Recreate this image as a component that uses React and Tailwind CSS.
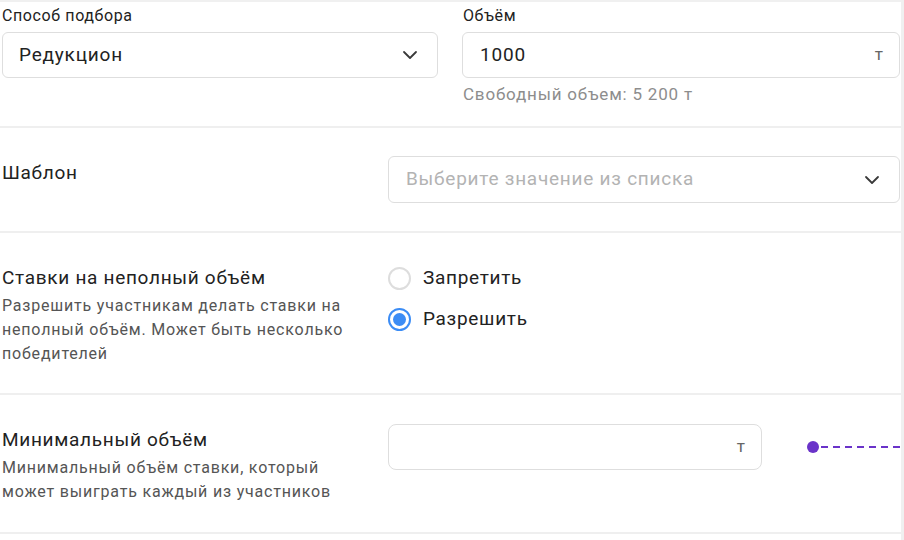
import React from "react";

function Chevron({ className = "" }) {
  return (
    <svg width="16" height="10" viewBox="0 0 16 10" className={className} fill="none">
      <path d="M2 2l6 6 6-6" stroke="#3a3a3a" strokeWidth="1.8" strokeLinecap="round" strokeLinejoin="round" />
    </svg>
  );
}

function Divider() {
  return <div className="h-[2px] bg-[#efefef]" />;
}

export default function App() {
  return (
    <div
      className="w-[904px] h-[540px] overflow-hidden bg-white text-[#222]"
      style={{ fontFamily: "Roboto, 'Noto Sans', sans-serif" }}
    >
      <div className="h-full border-t-2 border-r-[3px] border-[#f0f0f0]">
        {/* Row 1 */}
        <div className="flex gap-[24px] pl-[2px] pt-[4px] pb-[22px]">
          <div className="w-[436px] shrink-0">
            <div className="text-[16px] leading-[20px] h-[20px] tracking-[0.6px]">Способ подбора</div>
            <div className="mt-[6px] h-[46px] rounded-[6px] border border-[#dedede] flex items-center justify-between pl-[16px] pr-[19px]">
              <span className="text-[19px] tracking-[0.8px]">Редукцион</span>
              <Chevron />
            </div>
          </div>
          <div className="w-[438px] shrink-0">
            <div className="text-[16px] leading-[20px] h-[20px] pl-[1px] tracking-[0.6px]">Объём</div>
            <div className="mt-[6px] h-[46px] rounded-[6px] border border-[#dedede] flex items-center justify-between pl-[17px] pr-[16px]">
              <span className="text-[19px] tracking-[0.8px]">1000</span>
              <span className="text-[17px] text-[#666]">т</span>
            </div>
            <div className="mt-[6px] text-[17px] leading-[20px] text-[#8d8d8d] pl-[1px] tracking-[0.8px]">
              Свободный объем: 5 200 т
            </div>
          </div>
        </div>
        <Divider />

        {/* Row 2 */}
        <div className="flex pl-[2px] pt-[28px] pb-[28px]">
          <div className="w-[386px] shrink-0 pt-[5px] text-[19px] leading-[24px] tracking-[0.7px]">Шаблон</div>
          <div className="w-[512px] shrink-0 h-[47px] rounded-[6px] border border-[#dedede] flex items-center justify-between pl-[17px] pr-[19px]">
            <span className="text-[19px] text-[#b3b3b3] tracking-[0.75px]">Выберите значение из списка</span>
            <Chevron />
          </div>
        </div>
        <Divider />

        {/* Row 3 */}
        <div className="flex pl-[2px] pt-[33px] pb-[27px]">
          <div className="w-[386px] shrink-0">
            <div className="text-[19px] leading-[24px] tracking-[0.7px]">Ставки на неполный объём</div>
            <div className="mt-[4px] text-[16px] leading-[24px] text-[#555] tracking-[0.8px]">
              Разрешить участникам делать ставки на
              <br />
              неполный объём. Может быть несколько
              <br />
              победителей
            </div>
          </div>
          <div className="flex flex-col gap-[17px]">
            <div className="flex items-center gap-[12px] h-[24px]">
              <span className="w-[23px] h-[23px] rounded-full border-2 border-[#dddddd] bg-white" />
              <span className="text-[19px] tracking-[0.7px]">Запретить</span>
            </div>
            <div className="flex items-center gap-[12px] h-[24px]">
              <span className="w-[23px] h-[23px] rounded-full border-2 border-[#3b8cf5] bg-white flex items-center justify-center">
                <span className="w-[13px] h-[13px] rounded-full bg-[#3b8cf5]" />
              </span>
              <span className="text-[19px] tracking-[0.7px]">Разрешить</span>
            </div>
          </div>
        </div>
        <Divider />

        {/* Row 4 */}
        <div className="flex pl-[2px] pt-[29px] pb-[28px]">
          <div className="w-[386px] shrink-0 pt-[4px]">
            <div className="text-[19px] leading-[24px] tracking-[0.7px]">Минимальный объём</div>
            <div className="mt-[4px] text-[16px] leading-[24px] text-[#555] tracking-[0.8px]">
              Минимальный объём ставки, который
              <br />
              может выиграть каждый из участников
            </div>
          </div>
          <div className="w-[374px] shrink-0 h-[46px] rounded-[8px] border border-[#dedede] flex items-center justify-end pr-[16px]">
            <span className="text-[17px] text-[#666]">т</span>
          </div>
          <div className="flex items-center h-[46px] ml-[45px] flex-1">
            <span className="w-[12px] h-[12px] rounded-full bg-[#6a33c9] shrink-0" />
            <svg className="flex-1" height="4" preserveAspectRatio="none">
              <line x1="2" y1="2" x2="200" y2="2" stroke="#6a33c9" strokeWidth="2" strokeDasharray="7 5" />
            </svg>
          </div>
        </div>
        <Divider />
      </div>
    </div>
  );
}
